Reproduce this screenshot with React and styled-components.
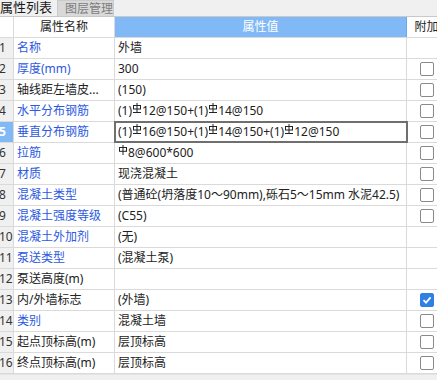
import styled, { createGlobalStyle } from "styled-components";

const GlobalStyle = createGlobalStyle`
  html, body {
    margin: 0;
    padding: 0;
    background: #ffffff;
    overflow: hidden;
  }
  body {
    font-family: "Noto Sans", "Noto Sans CJK SC", sans-serif;
    font-size: 12px;
    color: #222;
  }
`;

const Panel = styled.div`
  width: 460px;
  height: 380px;
  display: flex;
  flex-direction: column;
  background: #f0f0f0;
`;

const TabBar = styled.div`
  height: 16px;
  display: flex;
  align-items: stretch;
  gap: 2px;
  border-bottom: 1px solid #c9c9c9;
  background: #f0f0f0;
`;

const Tab = styled.div`
  box-sizing: border-box;
  width: ${(p) => (p.$active ? "55px" : "57px")};
  padding-left: ${(p) => (p.$active ? "0" : "7px")};
  font-family: "Noto Sans CJK SC", sans-serif;
  font-size: ${(p) => (p.$active ? "13px" : "12px")};
  line-height: 13px;
  color: ${(p) => (p.$active ? "#1a1a1a" : "#7d7d7d")};
  background: ${(p) => (p.$active ? "#f0f0f0" : "#d9d9d9")};
  border: ${(p) => (p.$active ? "none" : "1px solid #cbcbcb")};
  border-bottom: none;
  white-space: nowrap;
`;

const Table = styled.div`
  display: flex;
  flex-direction: column;
  background: #ffffff;
`;

const Row = styled.div`
  display: grid;
  grid-template-columns: 14px 101px 292px 40px;
  height: 20px;
  border-bottom: 1px solid #dadada;
`;

const NumCell = styled.div`
  border-right: 1px solid #dadada;
  background: ${(p) => (p.$head ? "#ffffff" : p.$sel ? "#80b9f6" : "#f0f0f0")};
  color: ${(p) => (p.$sel ? "#ffffff" : "#333")};
  font-weight: ${(p) => (p.$sel ? 700 : 400)};
  line-height: 20px;
  text-indent: -1px;
  overflow: hidden;
  white-space: nowrap;
`;

const NameCell = styled.div`
  border-right: 1px solid #dadada;
  padding-left: 3px;
  line-height: 20px;
  color: ${(p) => (p.$blue ? "#2c59e0" : "#222")};
  overflow: hidden;
  white-space: nowrap;
`;

const ValueCell = styled.div`
  border-right: 1px solid #dadada;
  padding-left: 3px;
  line-height: 20px;
  color: #222;
  overflow: hidden;
  white-space: nowrap;
  outline: ${(p) => (p.$sel ? "2px solid #6f6f6f" : "none")};
  outline-offset: -1px;
  position: relative;
  z-index: ${(p) => (p.$sel ? 1 : 0)};
`;

const HeadCell = styled.div`
  border-right: 1px solid ${(p) => (p.$blue ? "#6fa9ec" : "#dadada")};
  background: ${(p) => (p.$blue ? "#80b9f6" : "#ffffff")};
  color: ${(p) => (p.$blue ? "#ffffff" : "#222")};
  text-align: center;
  line-height: 20px;
  font-size: 12px;
  white-space: nowrap;
  overflow: hidden;
`;

const ExtraCell = styled.div`
  display: flex;
  align-items: center;
  justify-content: center;
`;

const Box = styled.span`
  box-sizing: border-box;
  width: 14px;
  height: 14px;
  border-radius: 2px;
  border: 1px solid ${(p) => (p.$checked ? "#2f7fe4" : "#8a8a8a")};
  background: ${(p) => (p.$checked ? "#2f7fe4" : "#ffffff")};
  display: flex;
  align-items: center;
  justify-content: center;
`;

const Footer = styled.div`
  flex: 1;
  background: #f0f0f0;
  border-top: 1px solid #e4e4e4;
`;

const Sym = styled.svg`
  width: 8px;
  height: 10px;
  margin: 0 1px 0 1px;
  vertical-align: 2px;
`;

// grade III rebar mark
const Hrb = () => (
  <Sym viewBox="0 0 8 10">
    <rect x="0.5" y="2.5" width="7" height="3.5" fill="none" stroke="#222" strokeWidth="1" />
    <line x1="4" y1="0" x2="4" y2="9" stroke="#222" strokeWidth="1" />
    <line x1="0" y1="9.5" x2="8" y2="9.5" stroke="#222" strokeWidth="1" />
  </Sym>
);

// grade I rebar mark
const Hpb = () => (
  <Sym viewBox="0 0 8 10">
    <rect x="0.5" y="2.5" width="7" height="3.8" fill="none" stroke="#222" strokeWidth="1" />
    <line x1="4" y1="0" x2="4" y2="10" stroke="#222" strokeWidth="1" />
  </Sym>
);

const Check = ({ checked }) => (
  <Box $checked={checked}>
    {checked && (
      <svg width="10" height="10" viewBox="0 0 10 10">
        <polyline points="1.5,5.2 4,7.6 8.6,2.4" fill="none" stroke="#fff" strokeWidth="1.8" />
      </svg>
    )}
  </Box>
);

const rows = [
  { name: "名称", value: "外墙", blue: true, cb: null },
  { name: "厚度(mm)", value: "300", blue: true, cb: false },
  { name: "轴线距左墙皮...", value: "(150)", blue: false, cb: false },
  {
    name: "水平分布钢筋",
    value: (
      <>
        (1)<Hrb />12@150+(1)<Hrb />14@150
      </>
    ),
    blue: true,
    cb: false,
  },
  {
    name: "垂直分布钢筋",
    value: (
      <>
        (1)<Hrb />16@150+(1)<Hrb />14@150+(1)<Hrb />12@150
      </>
    ),
    blue: true,
    cb: false,
    sel: true,
  },
  {
    name: "拉筋",
    value: (
      <>
        <Hpb />8@600*600
      </>
    ),
    blue: true,
    cb: false,
  },
  { name: "材质", value: "现浇混凝土", blue: true, cb: false },
  { name: "混凝土类型", value: "(普通砼(坍落度10～90mm),砾石5～15mm 水泥42.5)", blue: true, cb: false },
  { name: "混凝土强度等级", value: "(C55)", blue: true, cb: false },
  { name: "混凝土外加剂", value: "(无)", blue: true, cb: null },
  { name: "泵送类型", value: "(混凝土泵)", blue: true, cb: null },
  { name: "泵送高度(m)", value: "", blue: false, cb: null },
  { name: "内/外墙标志", value: "(外墙)", blue: false, cb: true },
  { name: "类别", value: "混凝土墙", blue: true, cb: false },
  { name: "起点顶标高(m)", value: "层顶标高", blue: false, cb: false },
  { name: "终点顶标高(m)", value: "层顶标高", blue: false, cb: false },
];

export default function App() {
  return (
    <>
      <GlobalStyle />
      <Panel>
        <TabBar>
          <Tab $active>属性列表</Tab>
          <Tab>图层管理</Tab>
        </TabBar>
        <Table>
          <Row>
            <NumCell $head />
            <HeadCell>属性名称</HeadCell>
            <HeadCell $blue>属性值</HeadCell>
            <HeadCell>附加</HeadCell>
          </Row>
          {rows.map((r, i) => (
            <Row key={i}>
              <NumCell $sel={r.sel}>{i + 1}</NumCell>
              <NameCell $blue={r.blue}>{r.name}</NameCell>
              <ValueCell $sel={r.sel}>{r.value}</ValueCell>
              <ExtraCell>{r.cb !== null && <Check checked={r.cb} />}</ExtraCell>
            </Row>
          ))}
        </Table>
        <Footer />
      </Panel>
    </>
  );
}
